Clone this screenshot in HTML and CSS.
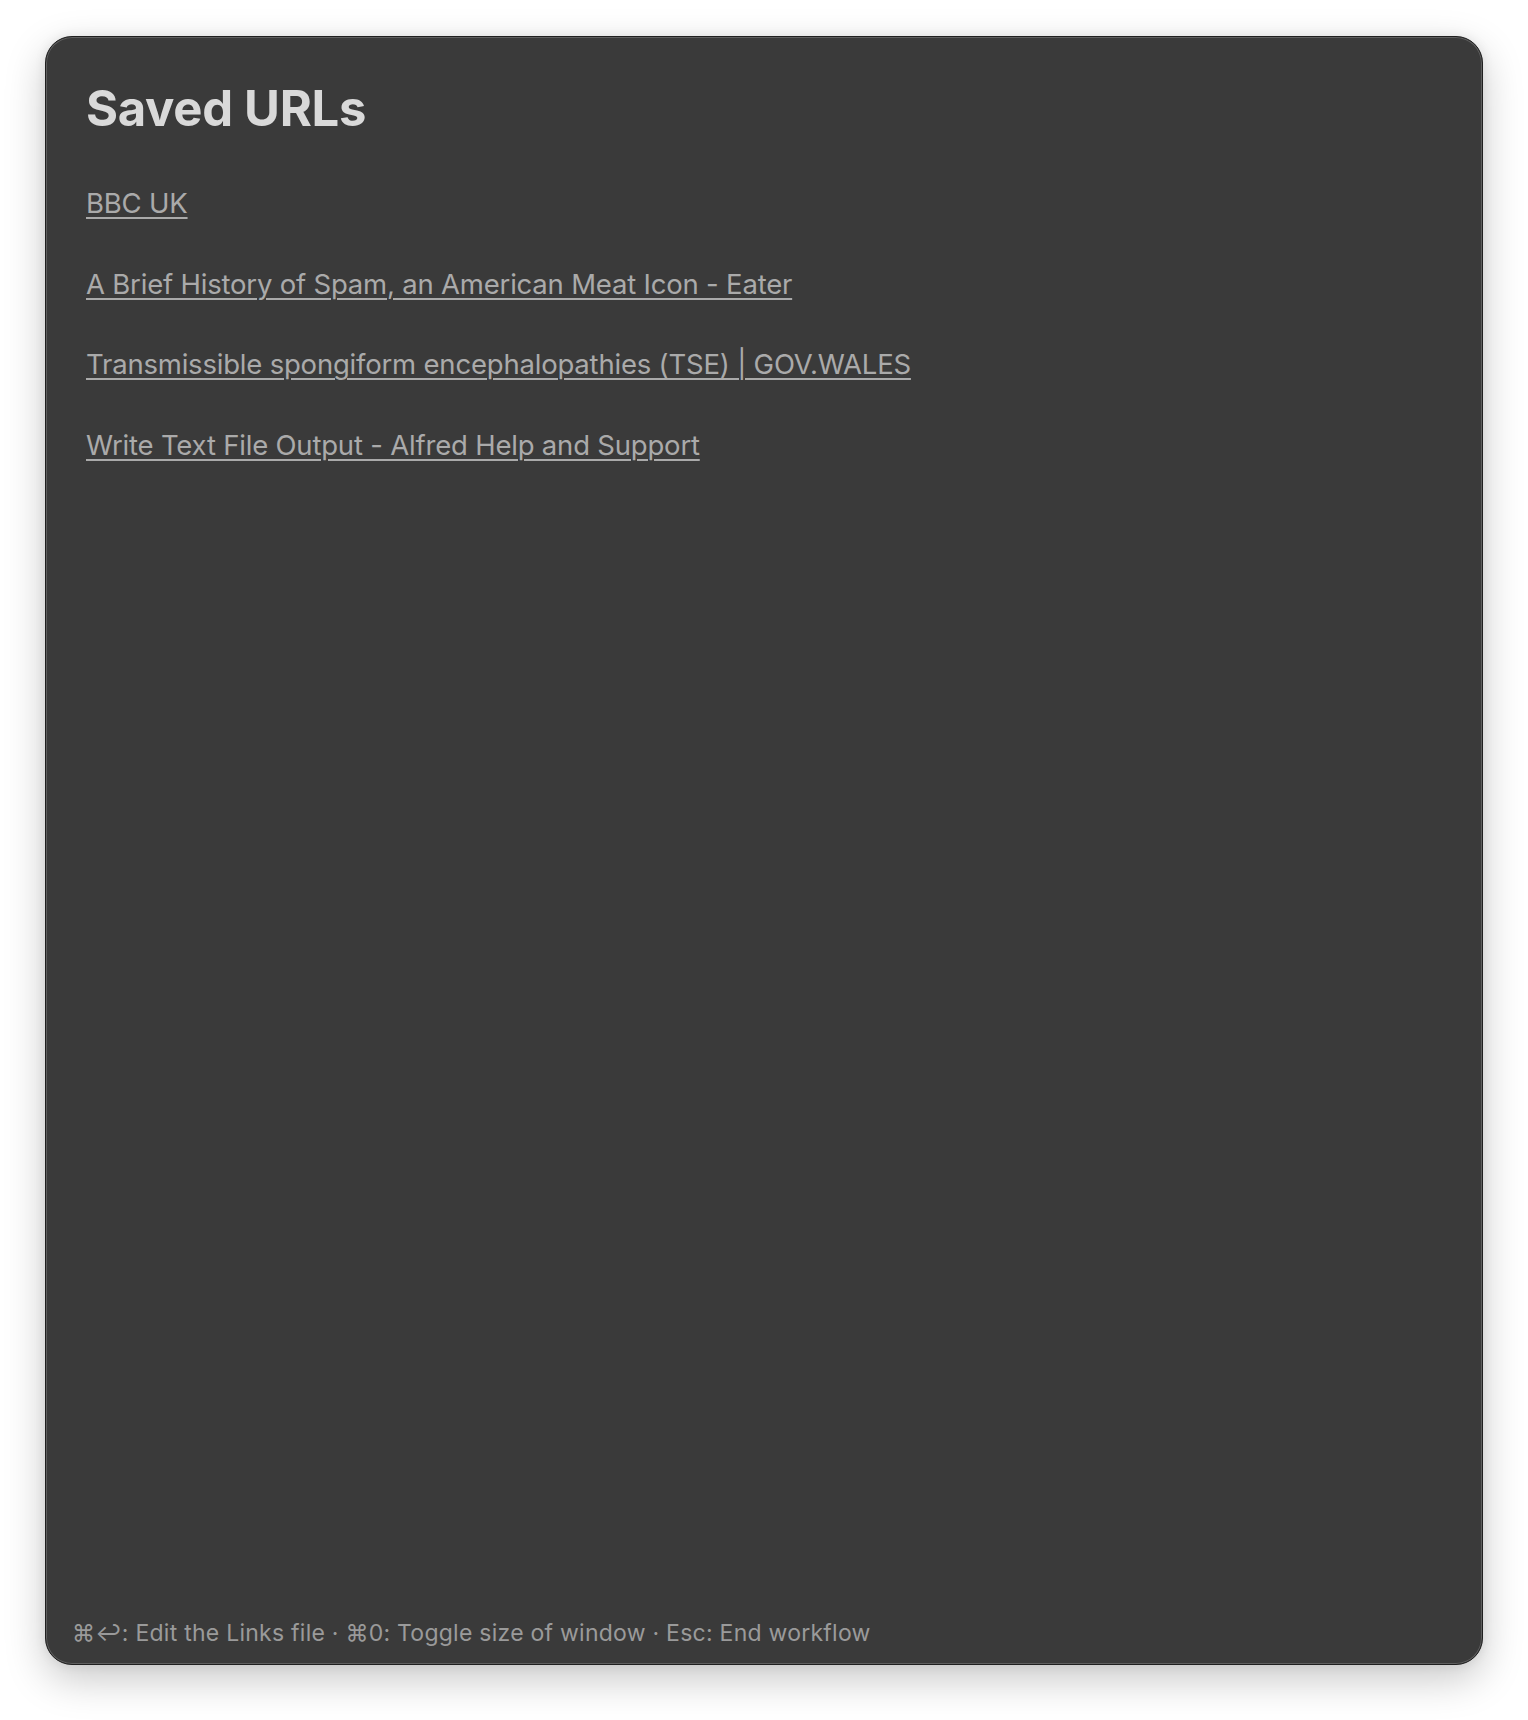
FILE: index.html
```html
<!DOCTYPE html>
<html lang="en">
<head>
<meta charset="utf-8">
<title>Saved URLs</title>
<link rel="stylesheet" href="styles.css">
</head>
<body>
<div class="window">
  <main class="content">
    <h1 class="title">Saved URLs</h1>
    <ul class="links">
      <li><a href="#">BBC UK</a></li>
      <li><a href="#">A Brief History of Spam, an American Meat Icon - Eater</a></li>
      <li><a href="#">Transmissible spongiform encephalopathies (TSE) | GOV.WALES</a></li>
      <li><a href="#">Write Text File Output - Alfred Help and Support</a></li>
    </ul>
  </main>
  <footer class="footer">⌘↩: Edit the Links file · ⌘0: Toggle size of window · Esc: End workflow</footer>
</div>
</body>
</html>
```

FILE: styles.css
```css
html, body {
  margin: 0;
  padding: 0;
  background: #ffffff;
}

body {
  font-family: Inter, "Noto Sans", "DejaVu Sans", sans-serif;
  padding: 36px 45px 55px 45px;
}

.window {
  box-sizing: border-box;
  width: 1438px;
  height: 1629px;
  background: #3a3a3a;
  border: 1px solid #1f1f1f;
  border-radius: 27px;
  box-shadow: inset 0 0 0 1px #5e5e5e, 0 14px 40px rgba(0, 0, 0, 0.22), 0 0 12px rgba(0, 0, 0, 0.08);
  display: flex;
  flex-direction: column;
}

.content {
  flex: 1;
  padding: 43px 40px 0 40px;
}

.title {
  margin: 0;
  font-size: 49px;
  line-height: 58px;
  font-weight: 700;
  color: #d9d9d9;
  letter-spacing: -0.3px;
}

.links {
  list-style: none;
  margin: 48px 0 0 0;
  padding: 0;
  display: flex;
  flex-direction: column;
  gap: 46.7px;
}

.links li {
  font-size: 27.5px;
  line-height: 34px;
  letter-spacing: -0.2px;
}

.links a {
  color: #aaaaaa;
  text-decoration: underline;
  text-decoration-thickness: 2px;
  text-underline-offset: 4px;
}

.footer {
  padding: 0 26px 18px 26px;
  font-size: 23px;
  line-height: 26px;
  letter-spacing: 0.25px;
  color: #9a9a9a;
}
```
